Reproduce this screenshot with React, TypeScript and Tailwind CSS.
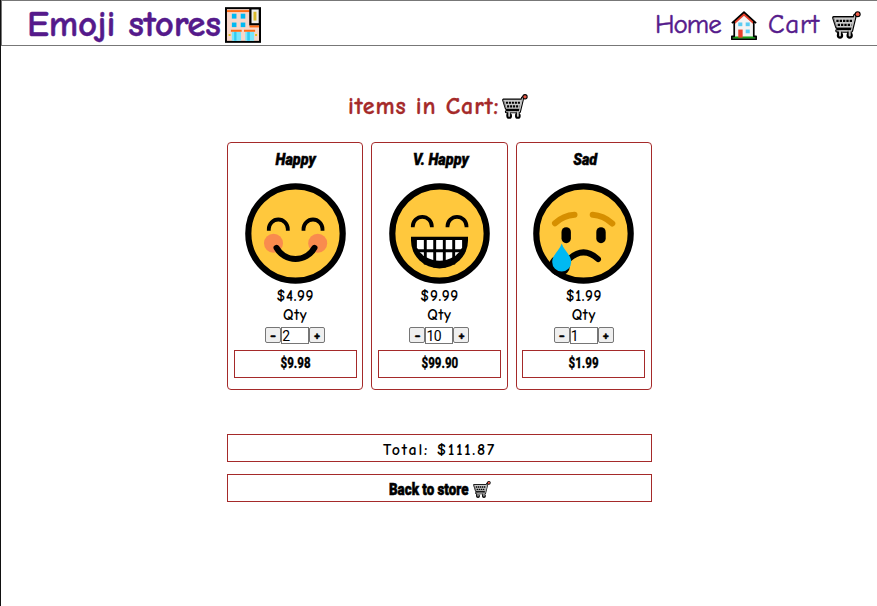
import React, { useState } from "react";

const comic = "font-['Comic_Sans_MS','Comic_Neue','Open_Sans',sans-serif]";
const impact = "font-['Impact','Liberation_Sans_Narrow','Roboto',sans-serif]";

function CartIcon({ className }: { className: string }) {
  return (
    <svg viewBox="0 0 87 83" className={className} fill="none" strokeLinejoin="round" strokeLinecap="round">
      <path d="M77 9 L69 13 L58 59 H15 M6 20 H67 L60 48 H15 Z" stroke="#000" strokeWidth="11" />
      <path d="M6 20 H67 L60 48 H15 Z" fill="#c9c9c9" stroke="#c9c9c9" strokeWidth="2" />
      <path d="M77 9 L69 13 L58 59 H15" stroke="#c0c0c0" strokeWidth="4" />
      <path d="M13 29 H61" stroke="#000" strokeWidth="7" strokeLinecap="butt" strokeDasharray="7 3" />
      <path d="M17 41 H58" stroke="#000" strokeWidth="7" strokeLinecap="butt" strokeDasharray="7 3" />
      <circle cx="77" cy="9" r="9" fill="#000" />
      <circle cx="77" cy="9" r="5.5" fill="#ee5b48" />
      <path d="M22 62 V71 M52 62 V71" stroke="#000" strokeWidth="13" />
      <circle cx="24" cy="73" r="9.5" fill="#000" />
      <circle cx="53" cy="73" r="9.5" fill="#000" />
      <path d="M24 60 V73 M53 60 V73" stroke="#c4c4c4" strokeWidth="6" />
      <path d="M18 59 H57" stroke="#c0c0c0" strokeWidth="4" />
    </svg>
  );
}

function HouseIcon({ className }: { className: string }) {
  return (
    <svg viewBox="0 0 76 86" className={className} fill="none">
      <path d="M9 35 L38 9 L67 35 V82 H9 Z" fill="#f4f4f4" />
      <path d="M3 79 H73" stroke="#16a016" strokeWidth="7" />
      <path d="M9 35 L38 9 L67 35" stroke="#e8402a" strokeWidth="8" />
      <path d="M2 36 L38 3 L74 36 M9 32 V75 H2 V84 H74 V75 H67 V32" stroke="#000" strokeWidth="5" strokeLinejoin="round" />
      <rect x="21" y="55" width="13" height="24" fill="#e8402a" />
      <rect x="21" y="34" width="12" height="11" fill="#5bcdf3" />
      <rect x="43" y="34" width="12" height="11" fill="#5bcdf3" />
      <rect x="43" y="55" width="12" height="11" fill="#5bcdf3" />
    </svg>
  );
}

function StoreIcon({ className }: { className: string }) {
  return (
    <svg viewBox="0 0 110 109" className={className}>
      <rect x="3" y="3" width="104" height="103" fill="#f7d7ca" stroke="#000" strokeWidth="6" />
      <path d="M6 12 H75" stroke="#ff6a13" strokeWidth="6" />
      <path d="M74 3 H107 V56 H74 Z" fill="#000" />
      <rect x="81" y="7" width="22" height="42" fill="#eee" />
      <rect x="87" y="14" width="9" height="27" fill="#d9b92e" />
      <path d="M75 59 H104" stroke="#ff6a13" strokeWidth="6" />
      <g fill="#00b9f2">
        <rect x="21" y="20" width="14" height="15" />
        <rect x="48" y="20" width="14" height="15" />
        <rect x="21" y="47" width="14" height="14" />
        <rect x="48" y="47" width="14" height="14" />
      </g>
      <path d="M21 75 H49 V103 H21 Z M62 75 H89 V103 H62 Z" fill="#78e6fc" />
      <path d="M28 75 H35 V103 H28 Z M68 75 H76 V103 H68 Z" fill="#30cdf2" />
      <path d="M18 72 H51 M58 72 H92" stroke="#ff6a13" strokeWidth="6" />
      <path d="M11 85 H17 M92 85 H98" stroke="#e4c31d" strokeWidth="6" />
    </svg>
  );
}

function Face({ children, under }: { children: React.ReactNode; under?: React.ReactNode }) {
  return (
    <svg viewBox="-50.5 -50.5 101 101" className="block h-[101px] w-[101px] shrink-0" fill="none" strokeLinecap="round">
      <circle r="47.2" fill="#ffc83d" stroke="#000" strokeWidth="6.2" />
      {under}
      {children}
    </svg>
  );
}

const happyFace = (
  <Face>
    <circle cx="-22" cy="9.7" r="9.5" fill="#f98b4e" />
    <circle cx="22.2" cy="9.7" r="9.5" fill="#f98b4e" />
    <path d="M-26.7 -2.8 V-4.5 A9.5 9.5 0 0 1 -7.7 -4.5 V-2.8 M8 -2.8 V-4.5 A9.5 9.5 0 0 1 27 -4.5 V-2.8" stroke="#000" strokeWidth="3.8" strokeLinecap="butt" />
    <path d="M-19 14.3 A21.7 21.7 0 0 0 19 14.3" stroke="#000" strokeWidth="6" />
  </Face>
);

const grinFace = (
  <Face>
    <path d="M-26.7 -6.2 V-7.2 A9.5 9.5 0 0 1 -7.7 -7.2 V-6.2 M8 -6.2 V-7.2 A9.5 9.5 0 0 1 27 -7.2 V-6.2" stroke="#000" strokeWidth="3.8" strokeLinecap="butt" />
    <path d="M-28.5 3.3 H28.5 V7 A28.5 28 0 0 1 -28.5 7 Z" fill="#000" />
    <path d="M-22.6 6.4 H22.6 V14 A24 20 0 0 1 -22.6 14 Z" fill="#fff" />
    <path d="M-14.2 5 V31 M-4.8 5 V34 M4.8 5 V34 M14.2 5 V31 M-25 17.3 H25" stroke="#000" strokeWidth="2.9" strokeLinecap="butt" />
  </Face>
);

const sadFace = (
  <Face under={<circle cx="-24" cy="32" r="10.5" fill="#000" />}>
    <path d="M-28.5 -10.3 Q-20 -18 -9 -18.7 M9.2 -18.7 Q20 -18 28.8 -10" stroke="#d68f00" strokeWidth="6" />
    <rect x="-22" y="-6.3" width="9.4" height="16" rx="4.7" fill="#000" />
    <rect x="12.8" y="-6.3" width="9.4" height="16" rx="4.7" fill="#000" />
    <path d="M-14.6 25.7 Q0 12 14.6 25.7" stroke="#000" strokeWidth="5.8" />
    <path d="M-21.8 10 C-19.5 17 -12.3 21.5 -12.3 28.5 A9.5 9.5 0 0 1 -31.3 28.5 C-31.3 21.5 -24 17 -21.8 10 Z" fill="#00b9f2" />
  </Face>
);

const items = [
  { name: "Happy", price: 4.99, qty: 2, face: happyFace },
  { name: "V. Happy", price: 9.99, qty: 10, face: grinFace },
  { name: "Sad", price: 1.99, qty: 1, face: sadFace },
];

const stepButton =
  "flex h-4 w-4 items-center justify-center rounded-[2px] border border-[#767676] bg-[#efefef] pt-px text-[15px] leading-none font-bold [-webkit-text-stroke:0.5px_black]";

export default function App() {
  const [quantities, setQuantities] = useState(items.map((i) => i.qty));
  const setQty = (index: number, qty: number) =>
    setQuantities(quantities.map((q, i) => (i === index ? Math.max(0, qty) : q)));
  const total = items.reduce((sum, item, i) => sum + item.price * quantities[i], 0);

  return (
    <div className={`h-[606px] w-[877px] overflow-hidden border-l border-[#111] bg-white text-black ${comic}`}>
      <header className="flex h-[46px] items-center justify-between border border-r-0 border-[#777] pr-4 pl-[25px] text-[#551a8b]">
        <a className="flex items-center">
          <span className="w-[198px] pt-[3px] text-[37px] leading-[41px] font-bold tracking-[-0.2px] whitespace-nowrap [-webkit-text-stroke:0.4px_#551a8b]">Emoji stores</span>
          <StoreIcon className="mt-1 h-[36px] w-[36px]" />
        </a>
        <nav className="flex items-center text-[27px] leading-[41px] whitespace-nowrap [-webkit-text-stroke:0.5px_#551a8b]">
          <span className="w-[76px] pt-[3px] tracking-[-1px]">Home</span>
          <HouseIcon className="mt-1 h-[29px] w-[26px]" />
          <span className="ml-[11px] w-[64px] pt-[3px] tracking-[0.7px]">Cart</span>
          <CartIcon className="mt-1 h-[28px] w-[29px]" />
        </nav>
      </header>

      <main className="ml-[226px] w-[425px]">
        <h1 className="mt-[43px] flex h-[34px] items-center pl-[121px] text-[24px] font-bold tracking-[0.85px] whitespace-nowrap text-[#a52a2a] [-webkit-text-stroke:0.3px_#a52a2a]">
          <span className="w-[154px]">items in Cart:</span>
          <CartIcon className="h-[25px] w-[26px]" />
        </h1>

        <section className="mt-[19px] flex gap-2">
          {items.map((item, i) => (
            <article key={item.name} className="flex h-[248px] flex-1 flex-col items-center rounded-[4px] border border-[#a52a2a] px-[5.6px]">
              <h2 className={`mt-[6px] ml-[2px] h-5 origin-center scale-x-[0.85] text-[17px] leading-5 font-black whitespace-nowrap italic [-webkit-text-stroke:0.5px_black] ${impact}`}>{item.name}</h2>
              <div className="mt-[14px]">{item.face}</div>
              <p className="mt-[3px] h-[19px] text-[15px] leading-[19px] font-bold tracking-[0.6px]">${item.price}</p>
              <p className="h-[19px] text-[15px] leading-[19px] font-bold tracking-[0.7px]">Qty</p>
              <div className="mt-[2px] flex items-start">
                <button className={stepButton} onClick={() => setQty(i, quantities[i] - 1)}>-</button>
                <input
                  className="h-[17px] w-[28px] border border-[#767676] bg-white font-['Liberation_Sans_Narrow','Roboto',sans-serif] text-[14px] leading-none tracking-[-0.5px]"
                  value={quantities[i]}
                  onChange={(e) => setQty(i, Number(e.target.value) || 0)}
                />
                <button className={stepButton} onClick={() => setQty(i, quantities[i] + 1)}>+</button>
              </div>
              <div className={`mt-[6px] flex h-7 w-full items-center justify-center border border-[#a52a2a] pb-[2px] text-[15px] font-extrabold ${impact}`}>
                <span className="scale-x-[0.77] [-webkit-text-stroke:0.3px_black]">${(item.price * quantities[i]).toFixed(2)}</span>
              </div>
            </article>
          ))}
        </section>

        <div className="mt-11 flex h-7 items-center justify-center border border-[#a52a2a] pt-[3px] text-[16px] font-bold tracking-[1.8px]">
          <span>Total: ${total.toFixed(2)}</span>
        </div>
        <button className={`mt-3 flex h-7 w-full items-center justify-center border border-[#a52a2a] pt-[3px] text-[17px] font-black whitespace-nowrap ${impact}`}>
          <span className="flex w-[84px] justify-start">
            <span className="origin-left scale-x-[0.785] [-webkit-text-stroke:0.6px_black]">Back to store</span>
          </span>
          <CartIcon className="h-[17px] w-[18px]" />
        </button>
      </main>
    </div>
  );
}
